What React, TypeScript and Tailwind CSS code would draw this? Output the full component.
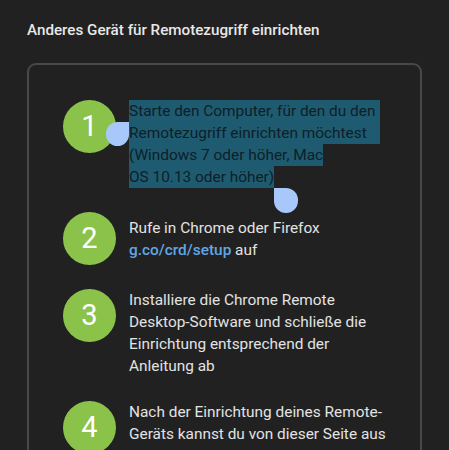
import React from "react";

function Circle({ n }: { n: number }) {
  return (
    <div className="w-[53px] h-[53px] shrink-0 rounded-full bg-[#8bc34a] flex items-center justify-center text-white text-[29px] leading-none font-normal">
      {n}
    </div>
  );
}

function Step({ n, children }: { n: number; children: React.ReactNode }) {
  return (
    <div className="flex items-start gap-[13px]">
      <Circle n={n} />
      <div className="min-h-[53px] flex flex-col justify-center text-[15.4px] leading-[22px] text-[#e3e3e3] whitespace-nowrap">
        {children}
      </div>
    </div>
  );
}

export default function App() {
  return (
    <div className="min-h-screen h-[450px] w-full overflow-hidden bg-[#212121] px-[27px] pt-[19px] font-['Roboto',sans-serif]">
      <h1 className="text-[15.2px] leading-[22px] font-medium text-[#e8e8e8]">
        Anderes Gerät für Remotezugriff einrichten
      </h1>
      <div className="mt-[22px] rounded-[9px] border-2 border-[#484848] pl-[34px] pt-[35px] pb-10 flex flex-col gap-[24px]">
        <Step n={1}>
          <div className="relative text-[#0c2028]">
            <div className="inline-block">
              <div className="h-[22px] pr-[5px] bg-[#1f5b70]">Starte den Computer, für den du den</div>
              <div className="relative h-[22px] bg-[#1f5b70]">
                Remotezugriff einrichten möchtest
                <span className="absolute right-full top-0 w-[23px] h-[24px] bg-[#a8c7fa] rounded-full rounded-tr-none" />
              </div>
            </div>
            <div>
              <span className="inline-block h-[22px] bg-[#1f5b70]">(Windows 7 oder höher, Mac</span>
            </div>
            <div>
              <span className="relative inline-block h-[22px] bg-[#1f5b70]">
                OS 10.13 oder höher)
                <span className="absolute left-full top-full w-[24px] h-[25px] bg-[#a8c7fa] rounded-full rounded-tl-none" />
              </span>
            </div>
          </div>
        </Step>
        <Step n={2}>
          <div>Rufe in Chrome oder Firefox</div>
          <div>
            <span className="text-[#62a6e6] font-medium">g.co/crd/setup</span> auf
          </div>
        </Step>
        <Step n={3}>
          <div>Installiere die Chrome Remote</div>
          <div>Desktop-Software und schließe die</div>
          <div>Einrichtung entsprechend der</div>
          <div>Anleitung ab</div>
        </Step>
        <Step n={4}>
          <div>Nach der Einrichtung deines Remote-</div>
          <div>Geräts kannst du von dieser Seite aus</div>
          <div>direkt darauf zugreifen</div>
        </Step>
      </div>
    </div>
  );
}
